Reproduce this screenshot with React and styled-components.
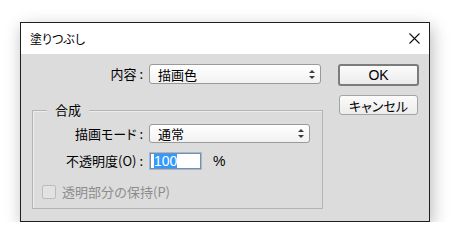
import React from "react"
import styled, { createGlobalStyle } from "styled-components"

const GlobalStyle = createGlobalStyle`
  body {
    margin: 0;
    background: #fff;
    font-family: "Noto Sans CJK JP", "Noto Sans", sans-serif;
    font-size: 13px;
    color: #000;
  }
`

function SpinArrows() {
  return (
    <svg width="6" height="9" viewBox="0 0 6 9">
      <path d="M3 0 L6 3 L0 3 Z" fill="#3c3c3c" />
      <path d="M0 6 L6 6 L3 9 Z" fill="#3c3c3c" />
    </svg>
  )
}

function CloseIcon() {
  return (
    <svg width="11" height="11" viewBox="0 0 11 11">
      <path d="M0.5 0.5 L10.5 10.5 M10.5 0.5 L0.5 10.5" stroke="#111" strokeWidth="1.1" />
    </svg>
  )
}

function Dropdown({ value, width, height }) {
  return (
    <Select width={width} height={height}>
      <span>{value}</span>
      <SpinArrows />
    </Select>
  )
}

function App() {
  return (
    <Page>
      <GlobalStyle />
      <Dialog>
        <TitleBar>
          <Title>塗りつぶし</Title>
          <CloseButton>
            <CloseIcon />
          </CloseButton>
        </TitleBar>
        <Body>
          <Form>
            <FieldRow>
              <Label>内容 :</Label>
              <Dropdown value="描画色" width={172} height={20} />
            </FieldRow>
            <Group>
              <Legend>合成</Legend>
              <FieldRow labelWidth={110}>
                <Label>描画モード :</Label>
                <Dropdown value="通常" width={161} height={19} />
              </FieldRow>
              <FieldRow labelWidth={110} gapTop={9}>
                <Label>不透明度(O) :</Label>
                <InputLine>
                  <NumberBox>
                    <Selected>100</Selected>
                  </NumberBox>
                  <Unit>%</Unit>
                </InputLine>
              </FieldRow>
              <CheckRow>
                <CheckBox />
                <CheckLabel>透明部分の保持(P)</CheckLabel>
              </CheckRow>
            </Group>
          </Form>
          <Buttons>
            <Button primary>OK</Button>
            <Button>キャンセル</Button>
          </Buttons>
        </Body>
      </Dialog>
    </Page>
  )
}

const Page = styled.div`
  padding: 22px 0 0 20px;
`

const Dialog = styled.div`
  width: 410px;
  height: 200px;
  box-sizing: border-box;
  border: 1px solid #1f1f1f;
  background: #dcdcdc;
  box-shadow: 2px 5px 16px rgba(0, 0, 0, 0.28);
  display: flex;
  flex-direction: column;
  overflow: hidden;
`

const TitleBar = styled.div`
  height: 31px;
  flex-shrink: 0;
  background: #fff;
  display: flex;
  align-items: center;
  justify-content: space-between;
  padding: 0 9px;
`

const Title = styled.div`
  font-size: 12px;
  font-feature-settings: "palt";
`

const CloseButton = styled.div`
  display: flex;
  align-items: center;
`

const Body = styled.div`
  display: flex;
  gap: 15px;
  padding: 10px 10px 0 11px;
`

const Form = styled.div`
  width: 291px;
  display: flex;
  flex-direction: column;
`

const FieldRow = styled.div`
  display: grid;
  grid-template-columns: ${(p) => p.labelWidth || 111}px auto;
  column-gap: 6px;
  align-items: center;
  margin-top: ${(p) => p.gapTop || 0}px;
`

const Label = styled.div`
  text-align: right;
  white-space: nowrap;
  font-feature-settings: "palt";
  line-height: 18px;
`

const Select = styled.div`
  width: ${(p) => p.width}px;
  height: ${(p) => p.height}px;
  box-sizing: border-box;
  border: 1px solid #9a9a9a;
  border-radius: 3px;
  background: linear-gradient(#ffffff, #f2f2f2);
  display: flex;
  align-items: center;
  justify-content: space-between;
  padding: 0 5px 0 8px;
  font-size: 13px;
`

const Group = styled.div`
  position: relative;
  margin-top: 26px;
  height: 99px;
  box-sizing: border-box;
  border: 1px solid #b4b4b4;
  box-shadow: inset 1px 1px 0 #ececec;
  padding-top: 13px;
`

const Legend = styled.span`
  position: absolute;
  top: -10px;
  left: 14px;
  padding: 0 8px;
  background: #dcdcdc;
  line-height: 18px;
`

const InputLine = styled.div`
  display: flex;
  align-items: center;
  gap: 11px;
`

const NumberBox = styled.div`
  width: 53px;
  height: 18px;
  box-sizing: border-box;
  border: 1px solid #8fbdee;
  box-shadow: inset 0 0 0 1px #8a8a8a;
  background: #fff;
  display: flex;
  align-items: center;
  padding-left: 4px;
`

const Selected = styled.span`
  background: #3399ff;
  color: #fff;
  font-family: "Liberation Sans", Arial, sans-serif;
  font-size: 14px;
  line-height: 14px;
`

const Unit = styled.span`
  font-family: "Liberation Sans", Arial, sans-serif;
  font-size: 14px;
`

const CheckRow = styled.div`
  display: flex;
  align-items: center;
  gap: 6px;
  margin-top: 13px;
  padding-left: 9px;
`

const CheckBox = styled.div`
  width: 14px;
  height: 14px;
  box-sizing: border-box;
  border: 1px solid #bcbcbc;
  border-radius: 2px;
  background: #e2e2e2;
`

const CheckLabel = styled.span`
  color: #8c8c8c;
  font-size: 13px;
  line-height: 18px;
`

const Buttons = styled.div`
  display: flex;
  flex-direction: column;
  align-items: center;
  width: 81px;
  gap: 9px;
`

const Button = styled.div`
  width: ${(p) => (p.primary ? 81 : 79)}px;
  height: ${(p) => (p.primary ? 22 : 20)}px;
  box-sizing: border-box;
  border: ${(p) => (p.primary ? "2px solid #7c7c7c" : "1px solid #a3a3a3")};
  border-radius: 3px;
  background: linear-gradient(#fbfbfb, #ececec);
  display: flex;
  align-items: center;
  justify-content: center;
  font-feature-settings: "palt";
  font-family: ${(p) =>
    p.primary ? '"Liberation Sans", Arial, sans-serif' : '"Noto Sans CJK JP", sans-serif'};
  font-size: ${(p) => (p.primary ? 14 : 13)}px;
`

export default App
